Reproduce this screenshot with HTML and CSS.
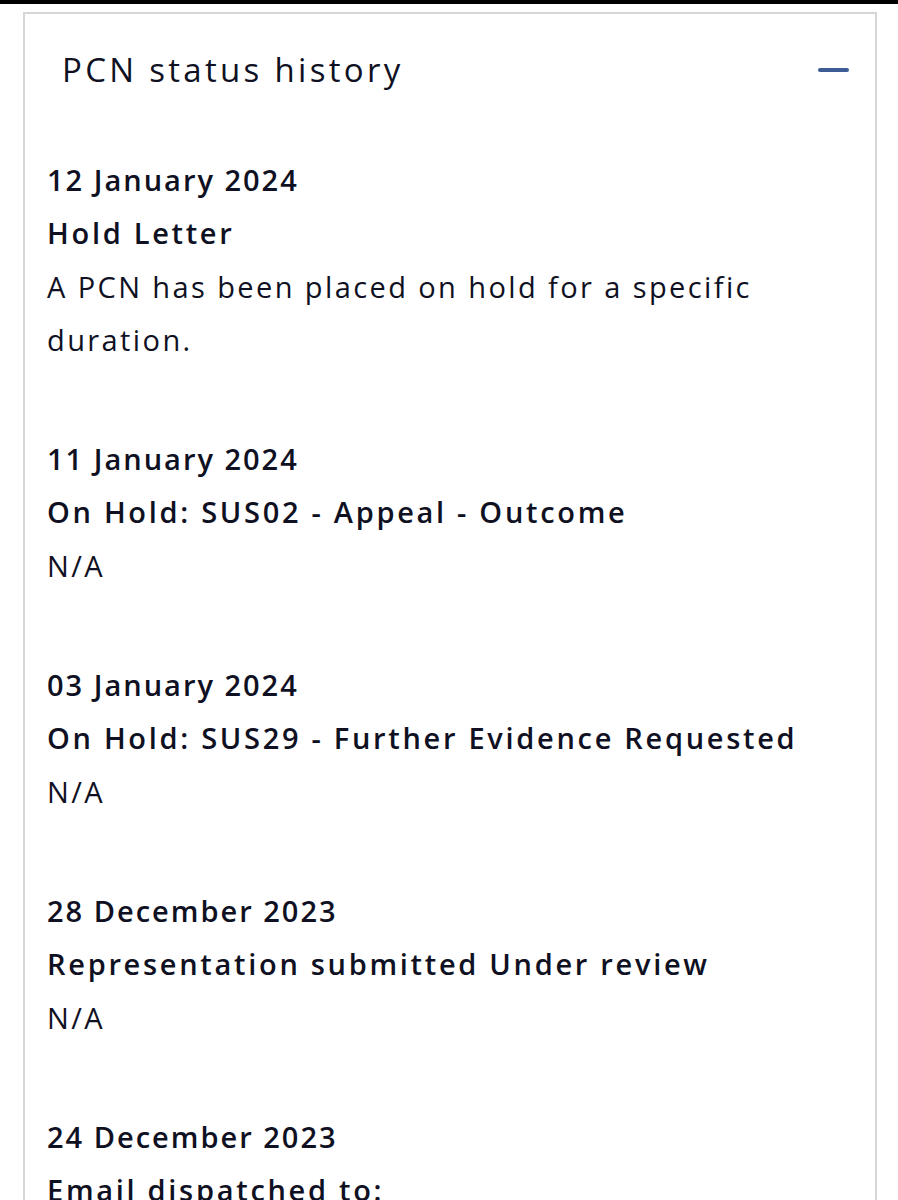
FILE: index.html
```html
<!DOCTYPE html>
<html lang="en">
<head>
<meta charset="utf-8">
<title>PCN status history</title>
<link rel="stylesheet" href="styles.css">
</head>
<body>
<div class="topbar"></div>
<section class="card">
  <header class="card-header">
    <h2 class="card-title">PCN status history</h2>
    <span class="collapse-icon" aria-label="Collapse"></span>
  </header>
  <ol class="history">
    <li class="entry">
      <div class="entry-date">12 January 2024</div>
      <div class="entry-status">Hold Letter</div>
      <div class="entry-desc">A PCN has been placed on hold for a specific duration.</div>
    </li>
    <li class="entry">
      <div class="entry-date">11 January 2024</div>
      <div class="entry-status">On Hold: SUS02 - Appeal - Outcome</div>
      <div class="entry-desc">N/A</div>
    </li>
    <li class="entry">
      <div class="entry-date">03 January 2024</div>
      <div class="entry-status">On Hold: SUS29 - Further Evidence Requested</div>
      <div class="entry-desc">N/A</div>
    </li>
    <li class="entry">
      <div class="entry-date">28 December 2023</div>
      <div class="entry-status">Representation submitted Under review</div>
      <div class="entry-desc">N/A</div>
    </li>
    <li class="entry">
      <div class="entry-date">24 December 2023</div>
      <div class="entry-status">Email dispatched to:</div>
      <div class="entry-desc">&nbsp;</div>
    </li>
  </ol>
</section>
</body>
</html>
```
FILE: styles.css
```css
html, body {
  margin: 0;
  padding: 0;
  background: #ffffff;
}
body {
  font-family: "Open Sans", "Liberation Sans", sans-serif;
  color: #0f1123;
  height: 1200px;
  overflow: hidden;
}
.topbar {
  height: 4px;
  background: #000000;
}
.card {
  margin: 8px 21px 0 23px;
  border: 2px solid #d6d6d6;
  border-bottom: none;
  min-height: 1300px;
}
.card-header {
  display: flex;
  align-items: center;
  justify-content: space-between;
  padding: 36px 26px 0 37px;
}
.card-title {
  margin: 0;
  font-size: 33px;
  font-weight: 400;
  line-height: 40px;
  letter-spacing: 3.3px;
}
.collapse-icon {
  display: block;
  width: 31px;
  height: 4px;
  border-radius: 2px;
  background: #3d5c96;
}
.history {
  list-style: none;
  margin: 0;
  padding: 63px 22px 0 22px;
}
.entry {
  font-size: 29px;
  line-height: 53.3px;
  margin-bottom: 66px;
}
.entry-date,
.entry-status {
  font-weight: 600;
}
.entry-date {
  letter-spacing: 2px;
}
.entry-status {
  letter-spacing: 2.7px;
}
.entry-desc {
  font-weight: 400;
  letter-spacing: 2.4px;
}
```
